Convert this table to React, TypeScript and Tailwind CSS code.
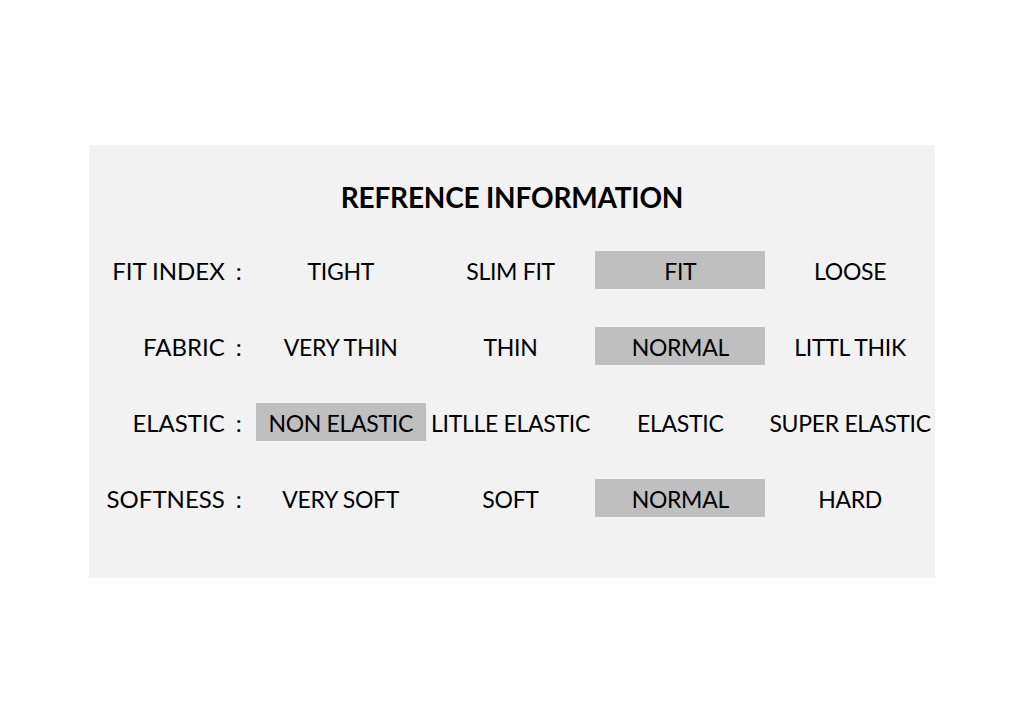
const ROWS: { label: string; options: string[]; selected: number }[] = [
  { label: 'FIT INDEX', options: ['TIGHT', 'SLIM FIT', 'FIT', 'LOOSE'], selected: 2 },
  { label: 'FABRIC', options: ['VERY THIN', 'THIN', 'NORMAL', 'LITTL THIK'], selected: 2 },
  { label: 'ELASTIC', options: ['NON ELASTIC', 'LITLLE ELASTIC', 'ELASTIC', 'SUPER ELASTIC'], selected: 0 },
  { label: 'SOFTNESS', options: ['VERY SOFT', 'SOFT', 'NORMAL', 'HARD'], selected: 2 },
];

export default function App() {
  return (
    <div className="w-[1024px] h-[724px] bg-white pt-[145px] pl-[89px] font-['Lato',sans-serif] text-black">
      <div className="w-[846px] h-[433px] bg-[#f2f2f2] flex flex-col">
        <h1 className="mt-[33px] text-center text-[28px] leading-[38px] font-bold tracking-[-0.2px]">
          REFRENCE INFORMATION
        </h1>
        <div className="mt-[35px] flex flex-col gap-[38px]">
          {ROWS.map((row) => (
            <div key={row.label} className="flex h-[38px] items-center">
              <div className="w-[167px] flex items-center justify-end pr-[14px] pt-[2px] text-[24px]">
                <span>{row.label}</span>
                <span className="ml-[11px]">:</span>
              </div>
              {row.options.map((opt, i) => (
                <div
                  key={opt}
                  className={`w-[170px] h-[38px] pt-[2px] flex items-center justify-center whitespace-nowrap text-[23px] tracking-[-0.3px] ${
                    i === row.selected ? 'bg-[#bfbfbf]' : ''
                  }`}
                >
                  {opt}
                </div>
              ))}
            </div>
          ))}
        </div>
      </div>
    </div>
  );
}
